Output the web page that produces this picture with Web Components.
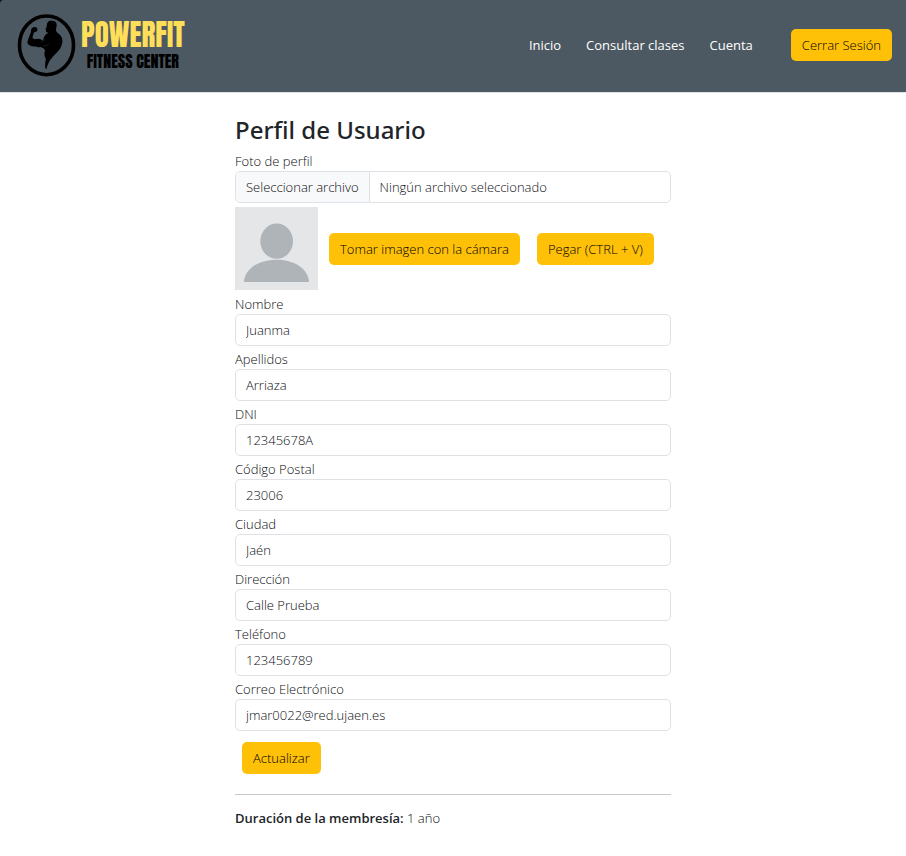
<!DOCTYPE html>
<html lang="es">
<head>
<meta charset="utf-8">
<meta name="viewport" content="width=device-width, initial-scale=1">
<title>Perfil de Usuario</title>
<style>
html { --amber: #ffc107; --line: #dee2e6; --ink: #0c0e11; --heading: #212529; }
body { margin: 0; background: #fff; color: var(--ink); font: 350 13px/20px "Open Sans", "Noto Sans", sans-serif; }
</style>
</head>
<body>
<profile-page></profile-page>
<script>
const define = (name, html, setup) => {
  const template = document.createElement('template');
  template.innerHTML = html;
  customElements.define(name, class extends HTMLElement {
    constructor() {
      super();
      this.attachShadow({ mode: 'open' }).append(template.content.cloneNode(true));
    }
    connectedCallback() {
      if (setup) setup(this, this.shadowRoot);
    }
  });
};

define('brand-logo', `
<style>
:host { display: block; }
a { display: flex; align-items: center; gap: 5px; text-decoration: none; color: #000; }
svg { width: 59px; height: 63px; flex: none; }
.words { display: flex; flex-direction: column; align-items: center; padding-top: 2px; font-family: Anton, Oswald, "Roboto Condensed", Roboto, sans-serif; font-weight: 400; }
.name { color: #ffde59; font-size: 29px; line-height: 30px; }
.sub { font-size: 16px; line-height: 22px; }
</style>
<a href="#inicio">
  <svg viewBox="10 11 178 191" aria-hidden="true">
    <ellipse cx="99" cy="106" rx="82" ry="89" fill="none" stroke="#000" stroke-width="11"/>
    <path d="M101 39 Q104 32 112 31 L124 33 Q130 36 130 44 L128 57 Q127 63 131 67 Q142 73 146 84 Q150 96 144 108 Q141 118 132 126 Q117 140 109 152 Q102 164 98 180 Q93 171 95 160 L97 147 Q91 138 93 127 L95 121 Q90 113 82 111 Q72 113 65 109 Q55 112 43 103 Q40 100 42 92 L52 65 Q51 54 59 51 Q68 49 71 55 Q73 61 69 64 L61 67 L56 84 Q62 88 68 87 Q78 84 88 91 Q91 79 96 74 Q103 70 105 67 L97 66 L98 60 L96 57 L99 51 Z" fill="#000"/>
    <path d="M83 97 Q92 93 95 86 M88 109 Q100 109 106 102" fill="none" stroke="#4d5962" stroke-width="1"/>
  </svg>
  <span class="words"><span class="name">POWERFIT</span><span class="sub">FITNESS CENTER</span></span>
</a>`);

define('amber-button', `
<style>
:host { display: inline-block; }
button { display: block; height: 32px; padding: 0 11px; border: 0; border-radius: 5px; background: var(--amber); color: #000; font: inherit; white-space: nowrap; cursor: pointer; }
button:hover { background: #ffca2c; }
</style>
<button type="button"><slot></slot></button>`);

define('nav-link', `
<style>
:host { display: block; }
a { color: #fff; text-decoration: none; white-space: nowrap; }
</style>
<a><slot></slot></a>`, (host, root) => {
  root.querySelector('a').setAttribute('href', host.getAttribute('href'));
});

define('site-header', `
<style>
:host { display: block; background: #11151c; border-bottom: 1px solid var(--line); }
header { display: flex; flex-wrap: wrap; align-items: center; justify-content: space-between; gap: 8px 24px; min-height: 92px; box-sizing: border-box; padding: 0 14px 2px 17px; background: #4d5962; border-top-left-radius: 4px; }
nav { display: flex; flex-wrap: wrap; align-items: center; gap: 25px; }
nav-link { font-weight: 400; }
amber-button { margin-left: 13px; }
</style>
<header>
  <brand-logo></brand-logo>
  <nav>
    <nav-link href="#inicio">Inicio</nav-link>
    <nav-link href="#clases">Consultar clases</nav-link>
    <nav-link href="#cuenta">Cuenta</nav-link>
    <amber-button>Cerrar Sesión</amber-button>
  </nav>
</header>`);

define('text-field', `
<style>
:host { display: block; }
label { display: block; }
input { display: block; box-sizing: border-box; width: 100%; height: 32px; padding: 0 10px; border: 1px solid var(--line); border-radius: 5px; background: #fff; color: inherit; font: inherit; }
</style>
<label for="field"></label>
<input id="field">`, (host, root) => {
  root.querySelector('label').textContent = host.getAttribute('label');
  const input = root.querySelector('input');
  input.type = host.getAttribute('type') || 'text';
  input.value = host.getAttribute('value');
});

define('file-field', `
<style>
:host { display: block; }
label { display: block; }
.box { position: relative; display: flex; align-items: stretch; height: 30px; line-height: 30px; border: 1px solid var(--line); border-radius: 5px; overflow: hidden; }
.pick { padding: 0 10px; background: #f8f9fa; border-right: 1px solid var(--line); white-space: nowrap; }
.name { padding: 0 10px; min-width: 0; overflow: hidden; text-overflow: ellipsis; white-space: nowrap; }
input { position: absolute; inset: 0; width: 100%; opacity: 0; cursor: pointer; }
</style>
<label for="file">Foto de perfil</label>
<div class="box">
  <span class="pick">Seleccionar archivo</span>
  <span class="name">Ningún archivo seleccionado</span>
  <input id="file" type="file" accept="image/*">
</div>`, (host, root) => {
  root.querySelector('input').onchange = e => {
    root.querySelector('.name').textContent = e.target.files[0]?.name || 'Ningún archivo seleccionado';
  };
});

define('user-avatar', `
<style>
:host { display: block; flex: none; }
svg { display: block; width: 83px; height: 83px; }
</style>
<svg viewBox="0 0 249 249" role="img" aria-label="Foto de perfil">
  <path fill="#e4e6e8" d="M0 0h249v249H0z"/>
  <ellipse cx="125" cy="102.500" rx="49" ry="53" fill="#aeb4b8"/>
  <path d="M27 225C29 187 69 158 125 158S220 187 222 225Z" fill="#aeb4b8"/>
</svg>`);

define('profile-form', `
<style>
:host { display: block; }
h1 { margin: 0 0 4px; color: var(--heading); font: 500 24px/34px "Noto Sans", sans-serif; }
.photo { display: flex; flex-wrap: wrap; align-items: center; gap: 11px; padding: 4px 0; }
.actions { display: flex; flex-wrap: wrap; gap: 17px; }
.fields { display: flex; flex-direction: column; gap: 3px; }
.submit { padding: 11px 7px 20px; }
hr { margin: 0; border: 0; border-top: 1px solid #c8c9ca; }
p { margin: 13px 0; }
strong { color: var(--heading); font-weight: 600; }
</style>
<form>
  <h1>Perfil de Usuario</h1>
  <file-field></file-field>
  <div class="photo">
    <user-avatar></user-avatar>
    <div class="actions">
      <amber-button>Tomar imagen con la cámara</amber-button>
      <amber-button>Pegar (CTRL + V)</amber-button>
    </div>
  </div>
  <div class="fields">
    <text-field label="Nombre" value="Juanma"></text-field>
    <text-field label="Apellidos" value="Arriaza"></text-field>
    <text-field label="DNI" value="12345678A"></text-field>
    <text-field label="Código Postal" value="23006"></text-field>
    <text-field label="Ciudad" value="Jaén"></text-field>
    <text-field label="Dirección" value="Calle Prueba"></text-field>
    <text-field label="Teléfono" type="tel" value="123456789"></text-field>
    <text-field label="Correo Electrónico" type="email" value="jmar0022@red.ujaen.es"></text-field>
  </div>
  <div class="submit"><amber-button>Actualizar</amber-button></div>
</form>
<hr>
<p><strong>Duración de la membresía:</strong> 1 año</p>`);

define('profile-page', `
<style>
:host { display: block; }
main { max-width: 436px; margin: 0 auto; padding: 20px 16px 0; }
</style>
<site-header></site-header>
<main><profile-form></profile-form></main>`);
</script>
</body>
</html>
